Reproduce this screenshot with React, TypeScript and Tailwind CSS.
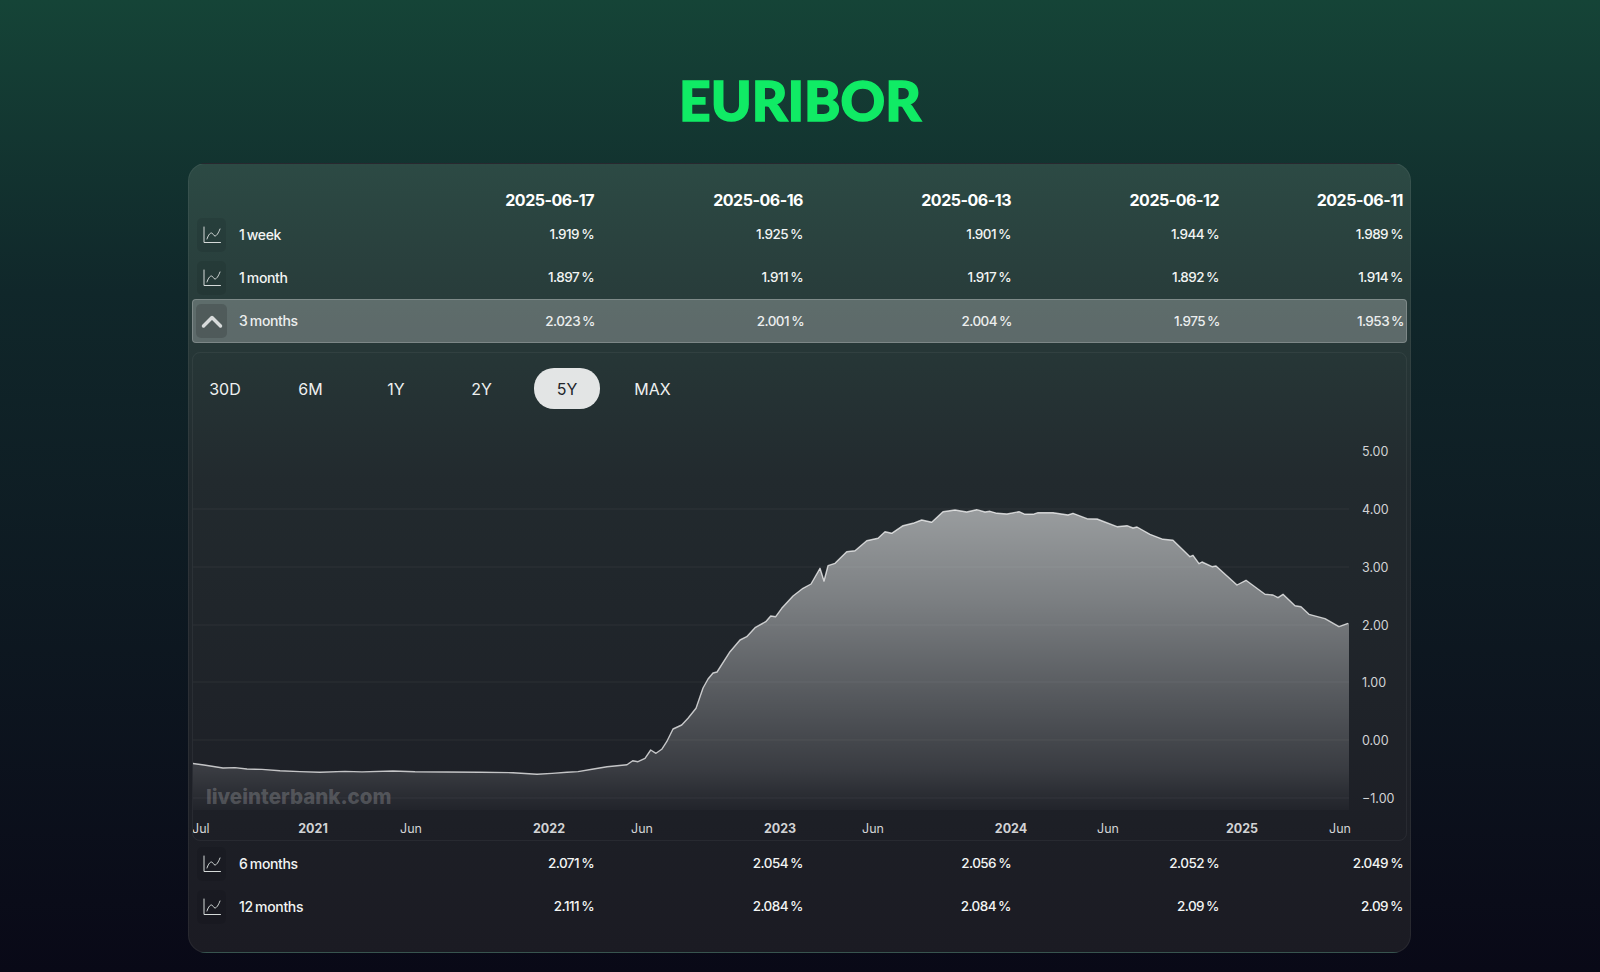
import React from 'react';

const dates = ['2025-06-17', '2025-06-16', '2025-06-13', '2025-06-12', '2025-06-11'];
const topRows = [
  { label: '1 week', values: ['1.919 %', '1.925 %', '1.901 %', '1.944 %', '1.989 %'] },
  { label: '1 month', values: ['1.897 %', '1.911 %', '1.917 %', '1.892 %', '1.914 %'] },
];
const openRow = { label: '3 months', values: ['2.023 %', '2.001 %', '2.004 %', '1.975 %', '1.953 %'] };
const bottomRows = [
  { label: '6 months', values: ['2.071 %', '2.054 %', '2.056 %', '2.052 %', '2.049 %'] },
  { label: '12 months', values: ['2.111 %', '2.084 %', '2.084 %', '2.09 %', '2.09 %'] },
];
const ranges = ['30D', '6M', '1Y', '2Y', '5Y', 'MAX'];

const gridCols = 'grid grid-cols-[200px_202px_209px_208px_208px_184px] items-center';
const cellText = 'text-[13.500px] font-medium tracking-[-0.04em] [word-spacing:-1px]';
const labelText = '-mt-px ml-px text-[14px] tracking-[-0.025em]';

// chart outline, in page pixels
const points: [number, number][] = [
  [192, 763.3], [204, 765], [223, 768], [235, 767.6], [247, 769], [262, 769.4], [280, 770.7], [300, 771.6], [320, 772.3],
  [345, 771.4], [362, 771.9], [393, 771], [415, 771.8], [447, 772], [480, 772.3], [513, 772.7],
  [537, 774.3], [552, 773.4], [567, 772.3], [578, 771.6], [592, 769.2], [607, 766.7], [627, 764.7], [632.7, 760.7], [638, 761.7], [645, 758.3],
  [650.7, 750], [656, 753.3], [661.7, 749.3], [666.7, 741.7], [673, 729], [681.7, 725], [688, 718.3],
  [696, 708.3], [703, 688], [708, 679], [713, 673], [717, 672], [730, 651.7], [740, 640], [746.7, 636.7],
  [755, 627.7], [765.7, 621.7], [770.7, 616], [775.7, 616.7], [781.7, 608.3], [793, 596], [803, 588.3],
  [811, 584], [820, 568.3], [824, 581], [828, 565.7], [835, 563.3], [846.7, 551.7], [855, 550.7],
  [866.7, 540.7], [878, 538.3], [885, 531.7], [891.7, 533.3], [903, 525.7], [913, 523.3], [921.7, 520],
  [931.7, 522.3], [943, 511.7], [955, 510], [966.7, 512], [976.7, 509.7], [985, 512], [990, 511.3],
  [997, 513.3], [1007, 514], [1019, 511.7], [1025, 514.3], [1033, 514.3], [1038, 512.7], [1053, 512.7],
  [1068, 515], [1073, 513.3], [1087, 518.7], [1097, 519], [1117, 526.7], [1127, 525.7], [1133, 528],
  [1137, 527], [1150, 534.3], [1163, 539.3], [1173, 540.3], [1190, 556.7], [1193, 555.3], [1199, 563.7],
  [1202, 562], [1212, 566.7], [1216, 566], [1237, 585], [1246, 580.3], [1265, 594.3], [1273, 595],
  [1278, 597.7], [1283, 594.3], [1295, 605.7], [1301, 606.7], [1309, 614.3], [1325, 618.7], [1339, 626.7],
  [1348, 623.3],
];
const linePath = points.map(([x, y], i) => `${i ? 'L' : 'M'}${x} ${y}`).join(' ');
const areaPath = `${linePath} L1349 623 L1349 810 L192 810 Z`;

const yTicks = [
  { y: 451, label: '5.00' },
  { y: 509, label: '4.00' },
  { y: 567, label: '3.00' },
  { y: 625, label: '2.00' },
  { y: 682, label: '1.00' },
  { y: 740, label: '0.00' },
  { y: 798, label: '\u22121.00' },
];
const xTicks = [
  { x: 313, label: '2021', year: true },
  { x: 411, label: 'Jun' },
  { x: 549, label: '2022', year: true },
  { x: 642, label: 'Jun' },
  { x: 780, label: '2023', year: true },
  { x: 873, label: 'Jun' },
  { x: 1011, label: '2024', year: true },
  { x: 1108, label: 'Jun' },
  { x: 1242, label: '2025', year: true },
  { x: 1340, label: 'Jun' },
];

const TrendIcon = () => (
  <svg width="18" height="18" viewBox="0 0 18 18" fill="none" stroke="currentColor" strokeWidth="1" strokeLinecap="round" strokeLinejoin="round">
    <path d="M1 1v15.500h16.500" />
    <path d="M4 13c1-3 2.500-6 4.500-6 1.500 0 2 3 3.500 3s3.500-3 5-7" />
  </svg>
);

const Row = ({ label, values }: { label: string; values: string[] }) => (
  <div className={`${gridCols} h-[43px] pr-1 ${cellText} text-[#f2f4f3]`}>
    <div className="flex items-center gap-[12px] pl-[5px]">
      <span className="flex h-[34px] w-[29px] items-center justify-center rounded-[5px] bg-black/[0.08] text-[#d5dad9]">
        <TrendIcon />
      </span>
      <span className={labelText}>{label}</span>
    </div>
    {values.map((v, i) => (
      <span key={i} className="text-right">{v}</span>
    ))}
  </div>
);

const Chart = () => (
  <svg width="1213" height="431" viewBox="193 409 1213 431" className="block">
    <defs>
      <linearGradient id="areaFill" gradientUnits="userSpaceOnUse" x1="0" y1="510" x2="0" y2="810">
        <stop offset="0" stopColor="#fff" stopOpacity="0.54" />
        <stop offset="0.3" stopColor="#fff" stopOpacity="0.41" />
        <stop offset="0.63" stopColor="#fff" stopOpacity="0.24" />
        <stop offset="0.87" stopColor="#fff" stopOpacity="0.12" />
        <stop offset="0.96" stopColor="#fff" stopOpacity="0.05" />
        <stop offset="1" stopColor="#fff" stopOpacity="0.02" />
      </linearGradient>
    </defs>
    <path d={areaPath} fill="url(#areaFill)" />
    {yTicks.slice(1).map(t => (
      <line key={t.label} x1="192" x2="1349" y1={t.y} y2={t.y} stroke="#fff" strokeOpacity="0.06" />
    ))}
    <path d={linePath} fill="none" stroke="#fff" strokeOpacity="0.72" strokeWidth="1.4" strokeLinejoin="round" />
    {yTicks.map(t => (
      <text key={t.label} x="1362" y={t.y + 4.500} fill="#d2d3d5" fontSize="12.500">{t.label}</text>
    ))}
    <text x="192" y="832.500" fill="#d2d3d5" fontSize="12.500">Jul</text>
    {xTicks.map(t => (
      <text
        key={`${t.label}${t.x}`}
        x={t.x}
        y="832.500"
        textAnchor="middle"
        fill="#d2d3d5"
        fontSize="12.500"
        fontWeight={t.year ? 700 : 400}
      >
        {t.label}
      </text>
    ))}
    <text x="206" y="804" fill="#fff" fillOpacity="0.2" fontSize="20.500" fontWeight="800">liveinterbank.com</text>
  </svg>
);

export default function App() {
  return (
    <div className="min-h-screen bg-gradient-to-b from-[#154437] via-[#10272a] via-30% to-[#090917] pt-[70px] pb-[18px] [font-family:Inter,sans-serif]">
      <h1 className="mb-[33px] text-center text-[55px] leading-[60px] font-black text-[#10eb65] [-webkit-text-stroke:1.500px_#10eb65] [font-family:Lato,sans-serif]">EURIBOR</h1>
      <div className="ml-[188px] w-[1223px] rounded-[18px] border border-white/[0.06] bg-gradient-to-b from-[#2c4a44] via-[#222a2e] via-40% to-[#1b1b23] px-[3px] pt-[24px] pb-[24px]">
        <div className={`${gridCols} h-[25px] pr-1 pb-px`}>
          <span />
          {dates.map(d => (
            <span key={d} className="text-right text-[16px] font-bold tracking-[-0.03em] text-white">{d}</span>
          ))}
        </div>
        {topRows.map(r => (
          <Row key={r.label} {...r} />
        ))}
        <div className={`${gridCols} h-[44px] rounded-[4px] border border-white/20 bg-white/25 pr-[3px] ${cellText} text-[#eceeee]`}>
          <div className="flex items-center gap-[12px] pl-[3px]">
            <span className="flex h-[34px] w-[31px] items-center justify-center rounded-[5px] bg-black/15 text-[#d8dbdb]">
              <svg width="24" height="16" viewBox="0 0 24 16" fill="none" stroke="currentColor" strokeWidth="3.500" strokeLinecap="round" strokeLinejoin="round">
                <path d="M3.500 13L12 4.500L20.500 13" />
              </svg>
            </span>
            <span className="-mt-px text-[14px] tracking-[-0.025em]">{openRow.label}</span>
          </div>
          {openRow.values.map((v, i) => (
            <span key={i} className="text-right">{v}</span>
          ))}
        </div>
        <div className="mt-[9px] rounded-[8px] border border-white/5">
          <div className="mt-[15px] -ml-px flex gap-[19.500px]">
            {ranges.map(r => (
              <button
                key={r}
                className={`h-[41px] w-[66px] rounded-[20px] text-[16px] ${r === '5Y' ? 'bg-[#e3e5e5] text-[#22262a]' : 'text-[#eef0f0]'}`}
              >
                {r}
              </button>
            ))}
          </div>
          <Chart />
        </div>
        <div className="pt-px">
          {bottomRows.map(r => (
            <Row key={r.label} {...r} />
          ))}
        </div>
      </div>
    </div>
  );
}
